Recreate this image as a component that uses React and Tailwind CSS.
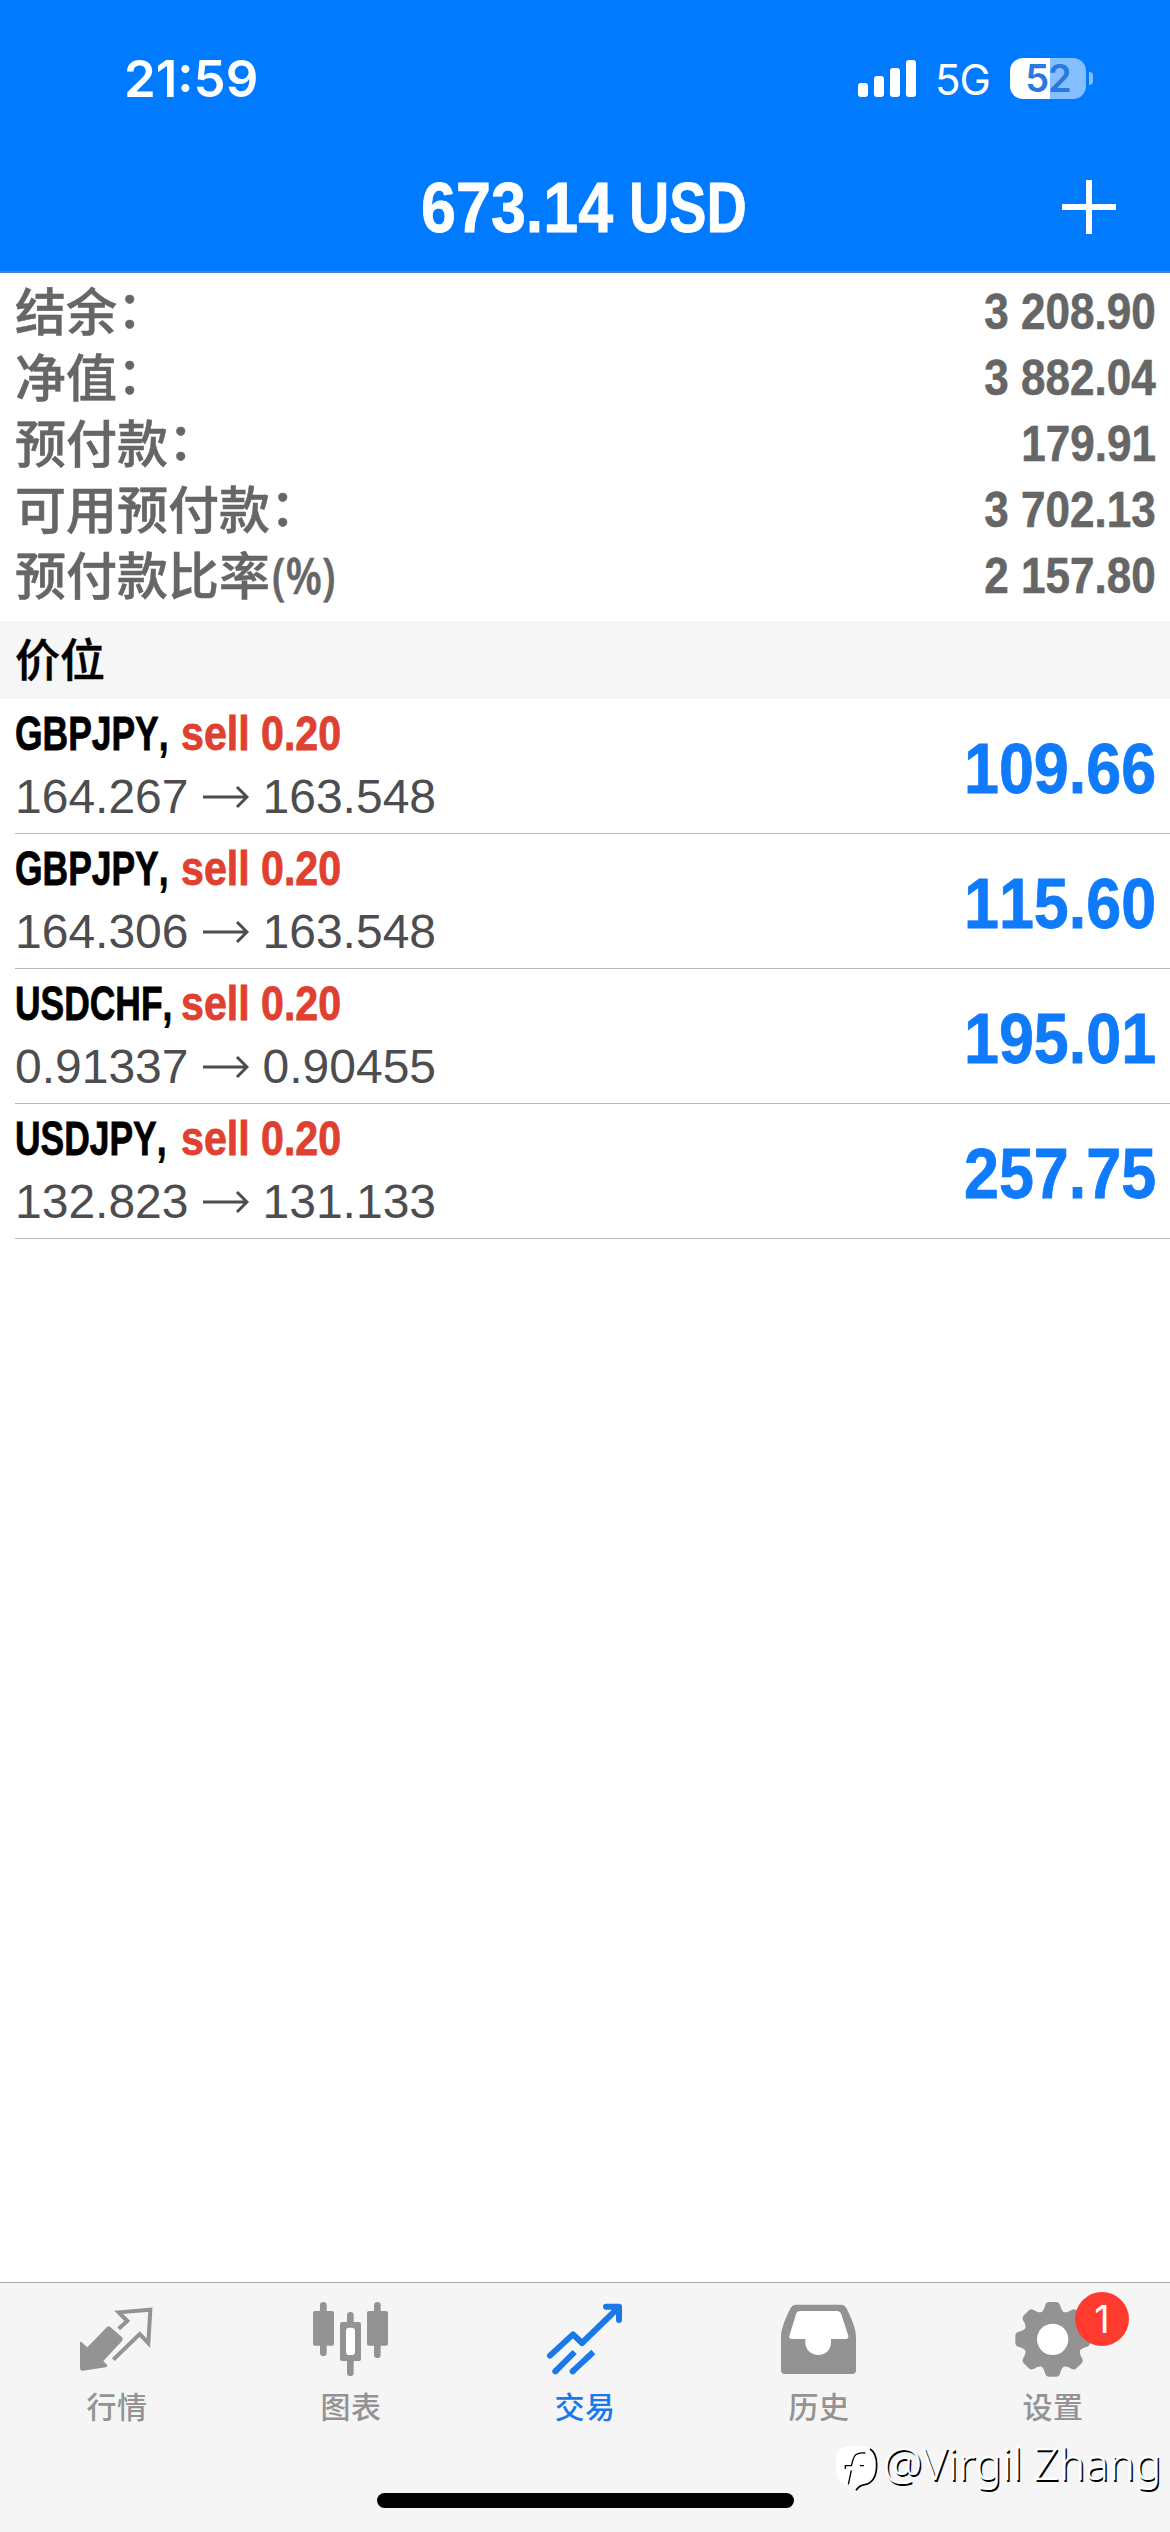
import clsx from "clsx";

const summary = [
  { label: "结余", suffix: "：", value: "3 208.90" },
  { label: "净值", suffix: "：", value: "3 882.04" },
  { label: "预付款", suffix: "：", value: "179.91" },
  { label: "可用预付款", suffix: "：", value: "3 702.13" },
  { label: "预付款比率", unit: "(%)", value: "2 157.80" },
];

const positions = [
  { id: 1, symbol: "GBPJPY", side: "sell 0.20", open: "164.267", current: "163.548", profit: "109.66" },
  { id: 2, symbol: "GBPJPY", side: "sell 0.20", open: "164.306", current: "163.548", profit: "115.60" },
  { id: 3, symbol: "USDCHF", side: "sell 0.20", open: "0.91337", current: "0.90455", profit: "195.01" },
  { id: 4, symbol: "USDJPY", side: "sell 0.20", open: "132.823", current: "131.133", profit: "257.75" },
];

const QuotesIcon = () => (
  <svg viewBox="0 0 234 234" className="w-[78px] h-[78px]" fill="none">
    <path
      d="M6 125 L10 126 L28 142 L87 81 Q92 76 97 81 L132 112 Q137 118 132 123 L76 183 L88 196 Q88 201 84 202 L14 212 Q6 212 6 205 Z"
      fill="currentColor"
    />
    <path d="M122 86 L148 63 L122 37 L217 29 L211 129 L185 102 L106 179" stroke="currentColor" strokeWidth="12" />
  </svg>
);

const ChartIcon = () => (
  <svg viewBox="0 0 234 234" className="w-[78px] h-[78px]" fill="currentColor">
    <rect x="24" y="6" width="20" height="162" rx="10" />
    <rect x="3" y="33" width="63" height="104" rx="6" />
    <rect x="105" y="36" width="20" height="192" rx="10" />
    <rect x="84" y="66" width="63" height="117" rx="6" />
    <rect x="102" y="83" width="27" height="82" rx="10" fill="#fff" />
    <rect x="186" y="6" width="20" height="168" rx="10" />
    <rect x="165" y="33" width="63" height="104" rx="6" />
  </svg>
);

const TradeIcon = () => (
  <svg viewBox="0 0 234 234" className="w-[78px] h-[78px]" fill="none" stroke="currentColor" strokeWidth="18">
    <path d="M12 167 L81 103 L108 129 L216 24" strokeLinecap="round" strokeLinejoin="round" />
    <path d="M180 20 H219 V60" strokeLinecap="round" strokeLinejoin="round" />
    <path d="M190 18 H221 V50 Z" fill="currentColor" stroke="none" />
    <path d="M28 214 L86 156 M80 214 L142 156" />
    <path d="M28 214 L30 212 M80 214 L82 212" strokeLinecap="round" />
  </svg>
);

const HistoryIcon = () => (
  <svg viewBox="0 0 234 234" className="w-[78px] h-[78px]" fill="currentColor">
    <path d="M52 14 H182 Q194 14 199 24 C213 52 228 84 228 112 V211 Q228 222 217 222 H14 Q3 222 3 211 V112 C3 84 18 52 32 24 Q37 14 49 14 Z" />
    <path
      d="M60 33 H170 Q180 33 184 43 L205 108 Q206 117 196 117 H153 V127 C153 150 136 165 115 165 C94 165 76 150 76 127 V117 H36 Q26 117 28 108 L48 43 Q51 33 60 33 Z"
      fill="#fff"
    />
  </svg>
);

const SettingsIcon = () => (
  <svg viewBox="0 0 234 234" className="w-[78px] h-[78px]" fill="currentColor">
    <circle cx="116" cy="118" r="87" />
    {[0, 45, 90, 135, 180, 225, 270, 315].map((angle) => (
      <path
        key={angle}
        transform={`rotate(${angle} 116 118)`}
        d="M76 41 C90 33 91 24 94 14 Q97 6 104 6 H128 Q135 6 138 14 C141 24 142 33 156 41 Z"
      />
    ))}
    <circle cx="116" cy="118" r="47" fill="#fff" />
  </svg>
);

const tabs = [
  { name: "行情", Icon: QuotesIcon },
  { name: "图表", Icon: ChartIcon },
  { name: "交易", Icon: TradeIcon, active: true },
  { name: "历史", Icon: HistoryIcon },
  { name: "设置", Icon: SettingsIcon, badge: 1 },
];

const StatusBar = () => (
  <div className="flex items-center justify-between h-[156px] pl-[124px] pr-[77px] font-['Inter',sans-serif]">
    <div className="text-[51px] font-semibold leading-none">21:59</div>
    <div className="flex items-center">
      <div className="flex items-end gap-[6px] h-[37px]">
        <div className="w-[10px] h-[14px] rounded-[3px] bg-white" />
        <div className="w-[10px] h-[21px] rounded-[3px] bg-white" />
        <div className="w-[10px] h-[29px] rounded-[3px] bg-white" />
        <div className="w-[10px] h-[37px] rounded-[3px] bg-white" />
      </div>
      <div className="ml-[19px] w-[56px] pt-1 text-[42px] leading-none tracking-[-1px]">5G</div>
      <div className="ml-[19px] flex items-center justify-center w-[76px] h-[41px] rounded-[13px] bg-[linear-gradient(90deg,#fff_53%,#86bfff_53%)] text-[38px] font-semibold leading-none tracking-[-1px] text-[#2b78df]">
        52
      </div>
      <div className="ml-[3px] w-[4px] h-[13px] rounded-r-full bg-[#86bfff]" />
    </div>
  </div>
);

const Header = () => (
  <header className="h-[273px] bg-[#007aff] border-b-2 border-[#4a86d8] text-white">
    <StatusBar />
    <div className="flex items-center h-[102px] pl-[421px] pr-[53px]">
      <div className="flex flex-1 text-[71px] font-bold leading-none whitespace-nowrap [-webkit-text-stroke:0.8px_currentColor]">
        <span className="w-[208px] origin-left scale-x-[0.885]">673.14</span>
        <span className="origin-left scale-x-[0.785]">USD</span>
      </div>
      <svg viewBox="0 0 56 56" className="w-[56px] h-[56px]" stroke="#fff" strokeWidth="6">
        <path d="M28 1 V55 M1 28 H55" />
      </svg>
    </div>
  </header>
);

const SummaryRow = ({ label, suffix, unit, value }) => (
  <div className="flex items-center justify-between h-[66px] pl-[15px] pr-[14px] text-[#666]">
    <div className="flex items-center pt-[2px] text-[51px] font-medium leading-none [-webkit-text-stroke:0.5px_currentColor]">
      <span>{label}</span>
      {suffix && <span className="-translate-y-[3px]">{suffix}</span>}
      {unit && (
        <span className="ml-[2px] -translate-y-[3px] origin-left scale-x-[0.83] text-[51px] font-semibold font-['Open_Sans',sans-serif]">
          {unit}
        </span>
      )}
    </div>
    <div className="origin-right scale-x-[0.88] text-[50px] font-bold leading-none whitespace-nowrap [-webkit-text-stroke:0.6px_currentColor]">
      {value}
    </div>
  </div>
);

const PositionRow = ({ symbol, side, open, current, profit }) => (
  <div className="flex items-center justify-between h-[135px] ml-[15px] pr-[14px] border-b border-[#b8b8b8]">
    <div className="flex flex-col gap-[15px] -mt-[2px]">
      <div className="flex text-[48px] font-bold leading-[48px] whitespace-nowrap [-webkit-text-stroke:0.8px_currentColor]">
        <span className="w-[166px] origin-left scale-x-[0.738]">{symbol},</span>
        <span className="origin-left scale-x-[0.857] text-[#e0402f]">{side}</span>
      </div>
      <div className="flex items-center text-[48px] leading-[48px] text-[#4d4d4f]">
        <span>{open}</span>
        <svg viewBox="0 0 46 24" className="w-[46px] h-[24px] ml-[14px] mr-[14px]" fill="none" stroke="currentColor" strokeWidth="3">
          <path d="M0 12 H44 M34 2 L44 12 L34 22" />
        </svg>
        <span>{current}</span>
      </div>
    </div>
    <div className="mt-[4px] origin-right scale-x-[0.885] text-[71px] font-bold leading-none text-[#0f7afa] [-webkit-text-stroke:0.8px_currentColor]">
      {profit}
    </div>
  </div>
);

const TabBar = () => (
  <nav className="h-[250px] border-t border-[#a8a8a8] bg-[#f5f5f5] flex flex-col items-center">
    <div className="grid grid-cols-5 w-full pt-[17px]">
      {tabs.map(({ name, Icon, active, badge }) => (
        <div
          key={name}
          className={clsx("relative flex flex-col items-center", active ? "text-[#1a78e8]" : "text-[#939393]")}
        >
          <Icon />
          <span className="mt-[15px] text-[30px] leading-[30px] tracking-[0.5px] font-medium">{name}</span>
          {badge && (
            <span className="absolute left-[139px] -top-[8px] flex items-center justify-center w-[54px] h-[54px] rounded-full bg-[#ff3b30] text-white text-[38px] leading-none font-['Inter',sans-serif]">
              {badge}
            </span>
          )}
        </div>
      ))}
    </div>
    <div className="mt-auto mb-[24px] w-[417px] h-[15px] rounded-full bg-black" />
  </nav>
);

const Watermark = () => (
  <div className="absolute left-[834px] top-[2435px] flex items-center h-[56px] whitespace-nowrap">
    <svg viewBox="0 0 132 150" className="mt-[10px] w-[44px] h-[50px]" fill="none" stroke="#000" strokeWidth="4">
      <path d="M40 10 H90 Q124 12 126 55 V75 Q124 125 90 127 L66 142 L50 127 Q6 127 6 80 V50 Q8 12 40 10 Z" fill="#fff" stroke="none" />
      <path d="M108 18 Q128 30 128 65 Q128 118 92 125 Q76 127 66 142" strokeWidth="5" />
      <path d="M94 30 Q62 26 57 50 Q54 62 52 68 H34 V78 M52 82 L43 124 M78 68 H90" />
    </svg>
    <span className="ml-[5px] text-[44px] leading-none font-light text-white font-['Noto_Sans','Open_Sans',sans-serif] [text-shadow:1.5px_1.5px_0_#000]">
      @Virgil Zhang
    </span>
  </div>
);

const App = () => {
  return (
    <div className="relative flex flex-col w-[1170px] h-[2532px] overflow-hidden bg-white font-['Liberation_Sans','Noto_Sans_CJK_SC',sans-serif] [font-kerning:none]">
      <Header />
      <section className="h-[348px] pt-[6px]">
        {summary.map((row) => (
          <SummaryRow key={row.label} {...row} />
        ))}
      </section>
      <div className="flex items-center h-[78px] pl-[15px] pt-[3px] bg-[#f6f6f6] text-black text-[45px] font-medium leading-none [-webkit-text-stroke:0.5px_currentColor]">
        价位
      </div>
      <main className="flex-1">
        {positions.map((position) => (
          <PositionRow key={position.id} {...position} />
        ))}
      </main>
      <TabBar />
      <Watermark />
    </div>
  );
};

export default App;
